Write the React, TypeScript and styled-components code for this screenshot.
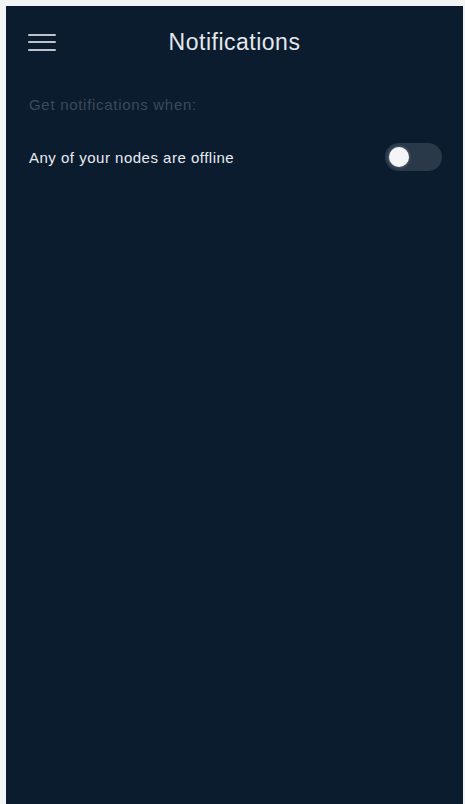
import React, { useState } from 'react';
import styled, { createGlobalStyle } from 'styled-components';

const GlobalStyle = createGlobalStyle`
  html, body {
    margin: 0;
    padding: 0;
    background: #f2f4f6;
  }
  body {
    font-family: "Liberation Sans", Arial, sans-serif;
  }
`;

const Screen = styled.div`
  margin: 6px 2px 0 6px;
  height: 798px;
  background-color: #0b1c2f;
  display: flex;
  flex-direction: column;
`;

const Header = styled.div`
  display: grid;
  grid-template-columns: 60px 1fr 60px;
  align-items: center;
  height: 72px;
`;

const MenuButton = styled.button`
  background: none;
  border: none;
  padding: 0 0 0 22px;
  height: 17px;
  display: flex;
  flex-direction: column;
  justify-content: space-between;
  cursor: pointer;
`;

const MenuLine = styled.span`
  display: block;
  width: 28px;
  height: 2px;
  border-radius: 1px;
  background-color: #bcc3cc;
`;

const Title = styled.h1`
  margin: 0;
  text-align: center;
  font-weight: 400;
  font-size: 23px;
  color: #e3e7ec;
  letter-spacing: 0.5px;
`;

const Content = styled.div`
  padding: 18px 21px 0 23px;
`;

const Subtitle = styled.div`
  font-size: 15px;
  letter-spacing: 0.7px;
  color: #3b4a5b;
  margin-bottom: 30px;
`;

const Row = styled.div`
  display: flex;
  align-items: center;
  justify-content: space-between;
`;

const RowLabel = styled.span`
  font-size: 15px;
  letter-spacing: 0.5px;
  color: #e8ebef;
`;

const Track = styled.button<{ $on: boolean }>`
  width: 57px;
  height: 28px;
  border: none;
  border-radius: 14px;
  padding: 0 4px;
  background-color: ${(p) => (p.$on ? '#2f7fd0' : '#2a394a')};
  display: flex;
  align-items: center;
  justify-content: ${(p) => (p.$on ? 'flex-end' : 'flex-start')};
  cursor: pointer;
`;

const Knob = styled.span`
  width: 20px;
  height: 20px;
  border-radius: 50%;
  background-color: #f4f5f6;
  box-shadow: 0 0 3px rgba(255, 255, 255, 0.4);
`;

const App: React.FC = () => {
  const [offlineAlerts, setOfflineAlerts] = useState(false);

  return (
    <>
      <GlobalStyle />
      <Screen>
        <Header>
          <MenuButton aria-label="Menu">
            <MenuLine />
            <MenuLine />
            <MenuLine />
          </MenuButton>
          <Title>Notifications</Title>
          <span />
        </Header>
        <Content>
          <Subtitle>Get notifications when:</Subtitle>
          <Row>
            <RowLabel>Any of your nodes are offline</RowLabel>
            <Track $on={offlineAlerts} onClick={() => setOfflineAlerts(!offlineAlerts)}>
              <Knob />
            </Track>
          </Row>
        </Content>
      </Screen>
    </>
  );
};

export default App;
